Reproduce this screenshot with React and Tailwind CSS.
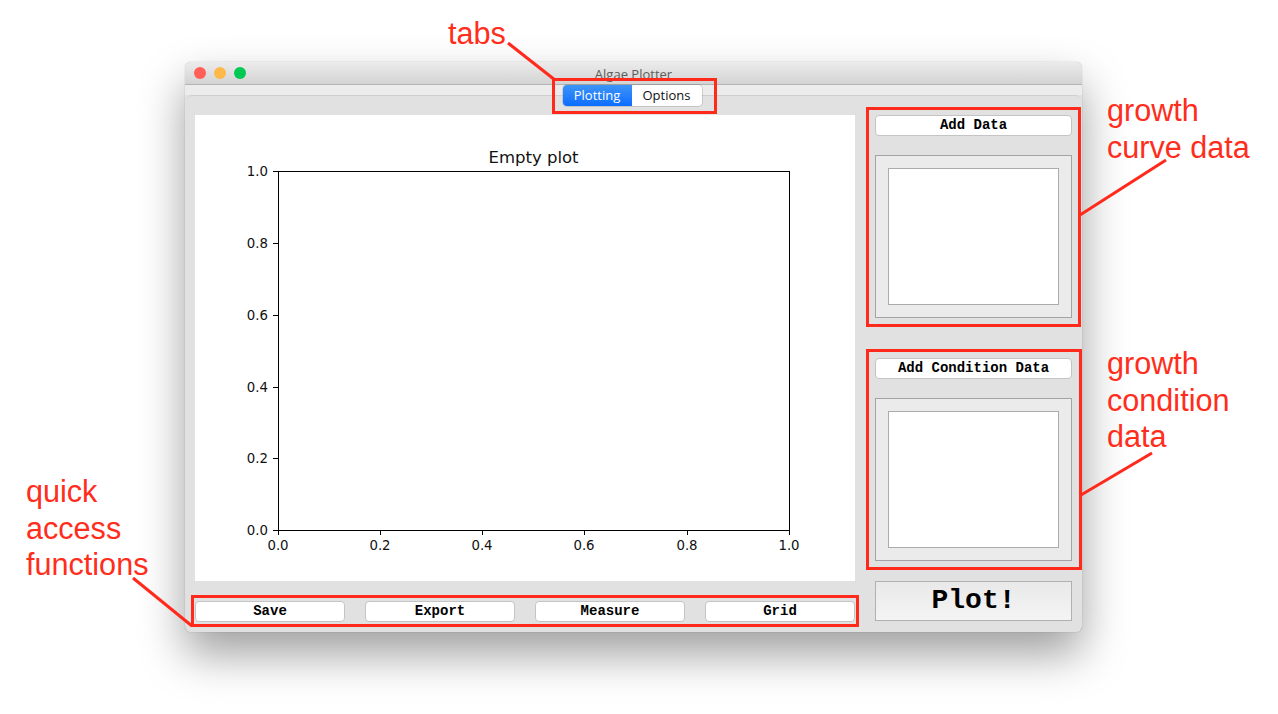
import React from 'react';

const monoBtn = "h-[21px] rounded-[4px] border border-[#c4c4c4] bg-white font-['Liberation_Mono',monospace] text-[14px] font-bold leading-[19px] text-black text-center";

function Plot() {
  const xTicks = [[278, '0.0'], [380, '0.2'], [482, '0.4'], [584, '0.6'], [687, '0.8'], [789, '1.0']];
  const yTicks = [[530, '0.0'], [458, '0.2'], [387, '0.4'], [315, '0.6'], [243, '0.8'], [171, '1.0']];
  return (
    <svg width="660" height="466" viewBox="195 115 660 466" className="block bg-white" style={{ fontFamily: "'DejaVu Sans', sans-serif" }}>
      <rect x="278.5" y="171.5" width="511" height="359" fill="none" stroke="#000" strokeWidth="1" />
      {xTicks.map(([x, t]) => (
        <g key={t}>
          <line x1={x + 0.5} y1="530" x2={x + 0.5} y2="535" stroke="#000" />
          <text x={x} y="550" textAnchor="middle" fontSize="13.3" fill="#111">{t}</text>
        </g>
      ))}
      {yTicks.map(([y, t]) => (
        <g key={t}>
          <line x1="273" y1={y + 0.5} x2="278" y2={y + 0.5} stroke="#000" />
          <text x="268" y={y + 5} textAnchor="end" fontSize="13.3" fill="#111">{t}</text>
        </g>
      ))}
      <text x="533.5" y="163" textAnchor="middle" fontSize="16.5" fill="#111">Empty plot</text>
    </svg>
  );
}

function DataBox() {
  return (
    <div className="mt-[19px] h-[163px] border border-[#a3a3a3] bg-[#ebebeb] p-[12px]">
      <div className="h-[137px] w-[171px] border border-[#ababab] bg-white"></div>
    </div>
  );
}

function Note({ className, lines }) {
  return (
    <div className={"absolute font-['Liberation_Sans',Arial,sans-serif] text-[30.6px] leading-[36.7px] text-[#ff2d1c] " + className}>
      {lines.map((l) => <div key={l}>{l}</div>)}
    </div>
  );
}

function Box({ className }) {
  return <div className={"absolute border-[3px] border-[#ff2a1c] " + className}></div>;
}

export default function App() {
  return (
    <div className="relative h-[714px] w-[1278px] overflow-hidden bg-white pl-[185px] pt-[62px]">
      {/* Window */}
      <div className="h-[570px] w-[897px] overflow-hidden rounded-[6px] bg-[#e1e1e1] shadow-[0_0_1px_rgba(0,0,0,0.4),0_22px_45px_rgba(0,0,0,0.38)]">
        <div className="flex h-[23px] items-center border-b border-[#b4b4b4] bg-gradient-to-b from-[#ececec] to-[#d3d3d3]">
          <div className="ml-[9px] flex gap-[8px]">
            <div className="h-[12px] w-[12px] rounded-full bg-[#ff5f57]"></div>
            <div className="h-[12px] w-[12px] rounded-full bg-[#ffb84a]"></div>
            <div className="h-[12px] w-[12px] rounded-full bg-[#00c853]"></div>
          </div>
          <div className="flex-1 pr-[61px] pt-[3px] text-center font-['Open_Sans',sans-serif] text-[13px] text-[#5c5c5c]">Algae Plotter</div>
        </div>

        {/* Tab strip */}
        <div className="flex h-[10px] justify-center bg-[#ececec] pr-[3px]">
          <div className="relative z-10 flex h-[21px] w-[139px] overflow-hidden rounded-[4px] bg-white font-['Open_Sans',sans-serif] text-[13px] leading-[21px] shadow-[0_0_0_1px_rgba(0,0,0,0.12)]">
            <div className="w-[69px] bg-gradient-to-b from-[#3d94f6] to-[#0a6cff] text-center text-white">Plotting</div>
            <div className="flex-1 text-center text-[#111]">Options</div>
          </div>
        </div>

        {/* Tab pane */}
        <div className="mx-[2px] flex h-[537px] gap-[20px] rounded-t-[5px] border-t border-[#cfcfcf] bg-[#e1e1e1] pl-[8px] pt-[19px]">
          <div className="w-[660px]">
            <Plot />
            <div className="mt-[20px] flex gap-[20px]">
              <div className={monoBtn + " w-[150px]"}>Save</div>
              <div className={monoBtn + " w-[150px]"}>Export</div>
              <div className={monoBtn + " w-[150px]"}>Measure</div>
              <div className={monoBtn + " w-[150px]"}>Grid</div>
            </div>
          </div>
          <div className="w-[197px]">
            <div className={monoBtn}>Add Data</div>
            <DataBox />
            <div className={monoBtn + " mt-[40px]"}>Add Condition Data</div>
            <DataBox />
            <div className="mt-[20px] h-[40px] border border-[#b0b0b0] bg-gradient-to-b from-[#e9e9e9] to-[#f4f4f4] text-center font-['Liberation_Mono',monospace] text-[28px] font-bold leading-[38px] text-black">Plot!</div>
          </div>
        </div>
      </div>

      {/* Annotations */}
      <Box className="left-[552px] top-[78px] h-[36px] w-[165px]" />
      <Box className="left-[866px] top-[107px] h-[220px] w-[215px]" />
      <Box className="left-[866px] top-[349px] h-[221px] w-[216px]" />
      <Box className="left-[191px] top-[595px] h-[32px] w-[668px]" />
      <svg className="absolute left-0 top-0" width="1278" height="714" fill="none" stroke="#ff2a1c" strokeWidth="3">
        <path d="M508 43 L555 80" />
        <path d="M1166 160 L1080 215" />
        <path d="M1152 453 L1081 495" />
        <path d="M133 578 L192 626" />
      </svg>
      <Note className="left-[448px] top-[15px]" lines={['tabs']} />
      <Note className="left-[1107px] top-[92px]" lines={['growth', 'curve data']} />
      <Note className="left-[1107px] top-[345px]" lines={['growth', 'condition', 'data']} />
      <Note className="left-[26px] top-[473px]" lines={['quick', 'access', 'functions']} />
    </div>
  );
}
